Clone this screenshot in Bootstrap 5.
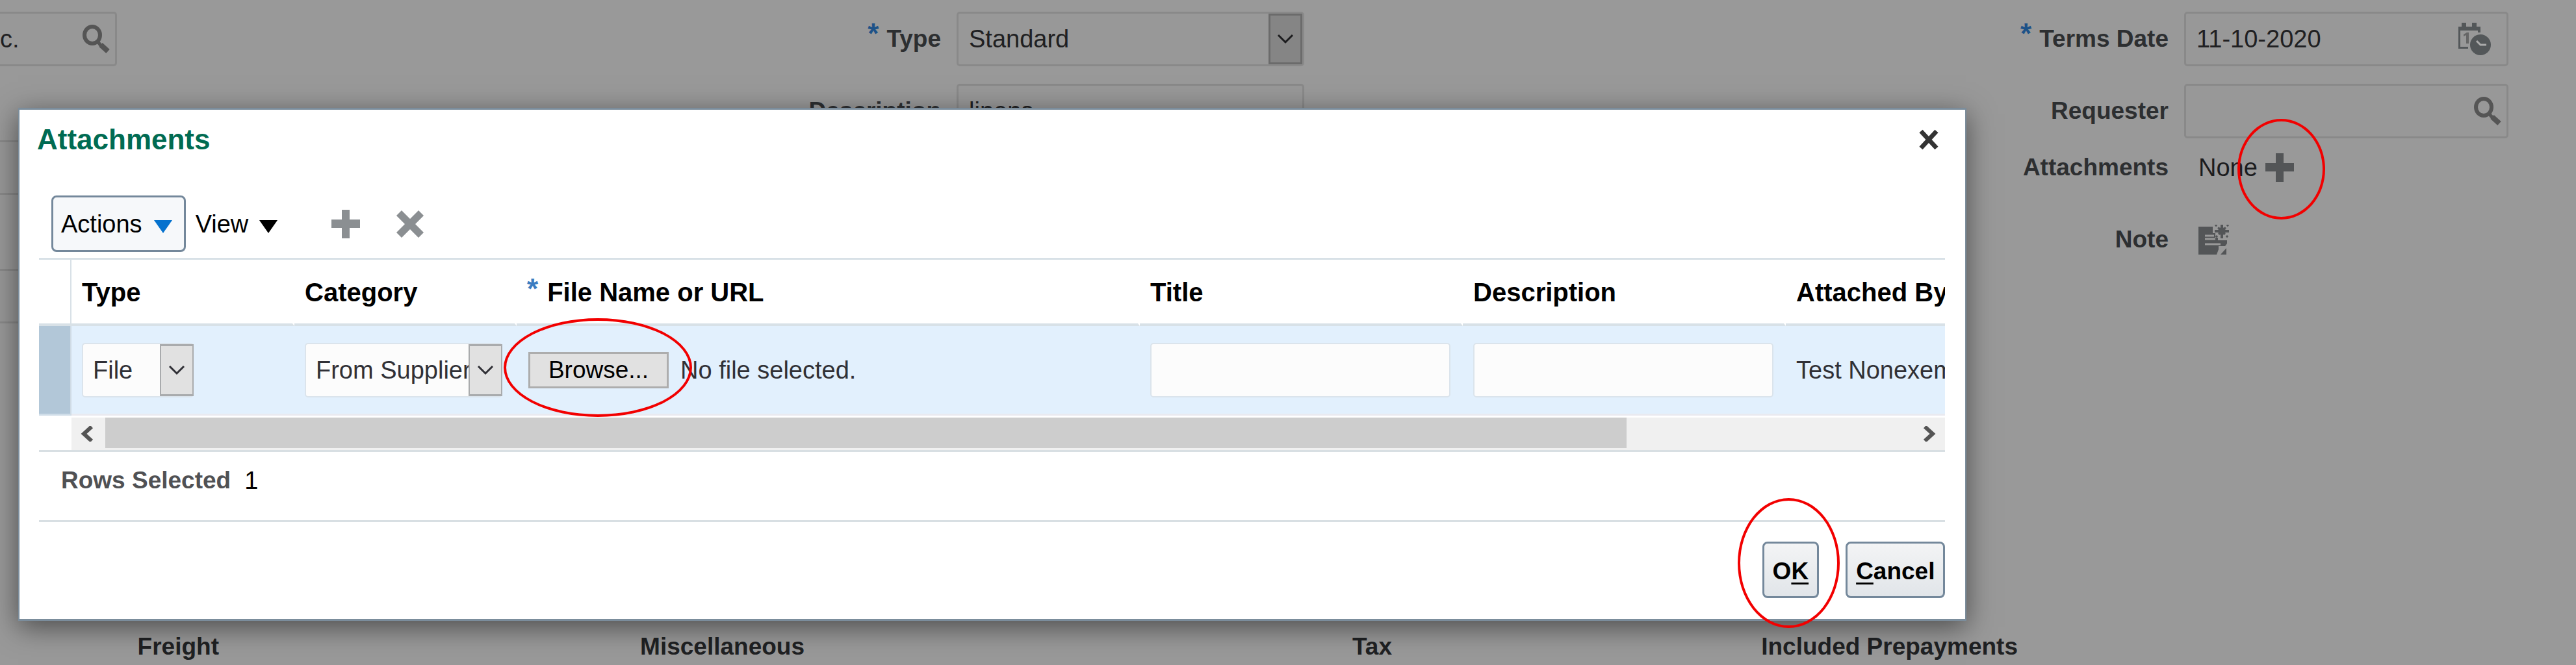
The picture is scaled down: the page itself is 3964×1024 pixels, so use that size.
<!DOCTYPE html>
<html lang="en">
<head>
<meta charset="utf-8">
<meta name="viewport" content="width=device-width, initial-scale=1">
<title>Attachments</title>
<link rel="stylesheet" href="https://cdn.jsdelivr.net/npm/bootstrap@5.3.0/dist/css/bootstrap.min.css">
<style>
  body { background: #999; color: #1c1c1e; font: 38px/44px "Liberation Sans", Arial, sans-serif; overflow-x: hidden; }
  svg { display: block; flex: none; }
  label, .caption { font-size: 37px; font-weight: 700; color: #2d2f31; white-space: nowrap; }
  button { font: inherit; color: inherit; }

  /* invoice form behind the dialog */
  .invoice { min-height: 100vh; padding-top: 18px; }
  .edge-col { width: 180px; flex: none; }
  .mid-col { flex: 1827 1 0; }
  .end-col { flex: 1853 1 0; margin-right: 104px; }
  .line { height: 84px; gap: 24px; }
  .line + .line { margin-top: 27px; }
  .line.tight { margin-top: 3px; }
  .slot { width: 499px; }
  .mid-col .slot { width: 535px; }
  .shell { height: 84px; border: 3px solid #898989; border-radius: 5px; background: #989898; }
  .shell input, .shell select { font: inherit; color: #202022; background: none; border: 0; outline: 0; appearance: none; min-width: 0; height: 100%; padding: 0 0 0 16px; }
  .edge-col .shell { border-left: 0; border-radius: 0 5px 5px 0; }
  .edge-col .shell input { padding-left: 0; }
  .edge-col .shell + .shell { margin-top: 114px; }
  .req { color: #1d5288; font-size: 44px; font-weight: 700; line-height: 44px; align-self: flex-start; }
  .line .req { margin: 12px -12px 0 0; }
  .drop { width: 52px; height: 100%; margin-left: -52px; flex: none; background: #858585; border: 3px solid #6b6b6b; pointer-events: none; }
  .none { padding-left: 22px; gap: 12px; }
  .totals { display: grid; grid-template-columns: 337fr 901fr 904fr 963fr 859fr; padding-bottom: 2px; text-align: right; }
  .totals .caption { color: #1f2123; line-height: 52px; }

  /* marker rings */
  .ring-host { position: relative; }
  .ring { position: absolute; border: 4px solid #f20000; border-radius: 50%; pointer-events: none; }
  .ring-add { left: -43px; top: -53px; width: 135px; height: 155px; }
  .ring-browse { left: -38px; top: -52px; width: 290px; height: 152px; }
  .ring-ok { left: -38px; top: -67px; width: 157px; height: 200px; }

  /* dialog */
  .dialog-box { position: absolute; left: 28px; top: 166px; width: calc(76.4% - 30px); background: #fff; color: #000; border: 3px solid #7b8d9c; border-width: 3px 2px; padding: 0 31px 0 30px; box-shadow: 0 10px 40px rgba(0,0,0,.5); }
  .dialog-title { font-size: 44px; line-height: 50px; font-weight: 700; color: #006b52; margin: 0 0 0 -3px; }
  .dialog-head { padding-top: 21px; }
  .close-x { padding: 0 9px; border: 0; background: none; }
  .tools { margin-top: 61px; height: 87px; padding-left: 19px; }
  .tool { height: 87px; padding: 0 18px 0 12px; gap: 18px; border: 3px solid #74889b; border-radius: 8px; background: #f6f8fa; }
  .tool.flat { border-color: transparent; background: none; padding: 0; gap: 17px; margin: 0 80px 0 12px; }
  .tools .bare { border: 0; background: none; padding: 0; margin-right: 54px; }
  .sheet { margin-top: 9px; border-top: 3px solid #d8e1e7; overflow-x: clip; }
  .sheet table { width: 3100px; table-layout: fixed; border-collapse: separate; border-spacing: 0; }
  .sheet th { height: 102px; padding: 2px 0 0 16px; font-size: 40px; font-weight: 700; vertical-align: middle; border-bottom: 4px solid #d8e1e7; border-right: 3px solid #fff; white-space: nowrap; }
  .sheet th:first-child { border-right: 2px solid #d8e1e7; border-bottom-color: #d8e1e7; }
  .sheet th .req { color: #3b7cc0; font-size: 44px; line-height: 34px; margin-right: 14px; }
  .sheet td { height: 138px; padding: 0 0 0 16px; background: #e2f0fd; color: #303036; border-bottom: 3px solid #e9eaf0; white-space: nowrap; vertical-align: middle; }
  .sheet td:first-child { background: #b2c7d8; border-right: 2px solid #cfdbe5; border-bottom-color: #cfdde8; }
  .cell-field { height: 84px; background: #fcfcfc; border: 2px solid #dbe4ec; border-radius: 5px; }
  select.cell-field, input.cell-field { font: inherit; color: #303036; appearance: none; padding: 0 0 0 15px; outline: 0; display: block; }
  .cell-drop { width: 52px; height: 80px; margin-left: -52px; flex: none; background: #e1e1e1; border: 3px solid #a9abad; border-width: 3px 2px; pointer-events: none; z-index: 1; }
  .browse { width: 216px; height: 56px; background: #e1e1e1; border: 3px solid #adadad; color: #000; padding: 0; line-height: 50px; font-size: 37px; }
  .file-pick { padding-left: 2px; gap: 18px; }
  .scroll-track { margin: 3px 0 0 50px; height: 50px; background: #f0f0f0; color: #555; padding: 0 14px; }
  .scroll-thumb { flex: 0 0 82%; height: 47px; background: #cdcdcd; margin-left: 18px; align-self: flex-start; }
  .selected { border-top: 3px solid #d8dfe3; border-bottom: 3px solid #d8dfe3; height: 111px; padding: 22px 0 0 34px; gap: 21px; }
  .selected .caption { color: #505154; }
  .actions { padding: 30px 0 32px; gap: 41px; }
  .action { height: 87px; padding: 5px 13px 0; border: 3px solid #74889b; border-radius: 8px; background: linear-gradient(#f3f4f5, #e1e5e9); font-size: 37px; font-weight: 700; }
  .action u { text-decoration-thickness: 3px; text-underline-offset: 5px; }
</style>
<script src="https://cdn.jsdelivr.net/npm/bootstrap@5.3.0/dist/js/bootstrap.bundle.min.js"></script>
</head>
<body>
<svg width="0" height="0" class="position-absolute" aria-hidden="true">
  <symbol id="i-search" viewBox="0 0 42 44"><ellipse cx="15" cy="16" rx="12" ry="13" fill="none" stroke="currentColor" stroke-width="6"/><path d="M24 27l6 7" stroke="currentColor" stroke-width="5"/><path d="M28 31l11 10" stroke="currentColor" stroke-width="8"/></symbol>
  <symbol id="i-plus" viewBox="0 0 44 44"><path d="M16 0h12v15h16v13H28v16H16V28H0V15h16z" fill="currentColor"/></symbol>
  <symbol id="i-cross" viewBox="0 0 44 44"><path d="M9 1l13 13L35 1l8 8-13 13 13 13-8 8-13-13L9 43l-8-8 13-13L1 9z" fill="currentColor"/></symbol>
  <symbol id="i-thin-cross" viewBox="0 0 32 32"><path d="M4 3l24 26M28 3L4 29" fill="none" stroke="currentColor" stroke-width="7"/></symbol>
  <symbol id="i-down" viewBox="0 0 26 16"><path d="M2 2l11 11L24 2" fill="none" stroke="currentColor" stroke-width="3"/></symbol>
  <symbol id="i-tri" viewBox="0 0 28 20"><path d="M0 0h28L14 20z" fill="currentColor"/></symbol>
</svg>

<main class="invoice d-flex flex-column justify-content-between">
  <form class="d-flex align-items-start">
    <div class="edge-col">
      <div class="shell d-flex align-items-center">
        <input class="flex-fill" type="text" value="c." aria-label="Supplier">
        <svg class="me-2" width="42" height="44" style="color:#555"><use href="#i-search"/></svg>
      </div>
      <div class="shell"></div>
      <div class="shell"></div>
    </div>

    <div class="mid-col">
      <div class="line d-flex align-items-center justify-content-end">
        <span class="req">*</span><label for="inv-type">Type</label>
        <div class="slot shell d-flex">
          <select id="inv-type" class="flex-fill"><option>Standard</option></select>
          <span class="drop d-flex align-items-center justify-content-center"><svg width="26" height="16"><use href="#i-down"/></svg></span>
        </div>
      </div>
      <div class="line d-flex align-items-center justify-content-end">
        <label for="inv-desc">Description</label>
        <div class="slot shell d-flex"><input id="inv-desc" class="flex-fill" type="text" value="linens"></div>
      </div>
    </div>

    <div class="end-col">
      <div class="line d-flex align-items-center justify-content-end">
        <span class="req">*</span><label for="terms">Terms Date</label>
        <div class="slot shell d-flex align-items-center">
          <input id="terms" class="flex-fill" type="text" value="11-10-2020">
          <svg class="me-4" width="50" height="50" viewBox="0 0 50 50" fill="#535759"><path d="M0 6h5V0h7v6h9V0h7v6h6v9h-4v-3H3v25h12v3H0z"/><path d="M8 18l5-3h3v17h-4V19l-4 2z" fill="#666"/><circle cx="34" cy="34" r="16"/><path d="M28 28l6 6h9" fill="none" stroke="#aaa" stroke-width="3"/></svg>
        </div>
      </div>
      <div class="line d-flex align-items-center justify-content-end">
        <label for="requester">Requester</label>
        <div class="slot shell d-flex align-items-center">
          <input id="requester" class="flex-fill" type="text">
          <svg class="me-2" width="42" height="44" style="color:#555"><use href="#i-search"/></svg>
        </div>
      </div>
      <div class="line tight d-flex align-items-center justify-content-end">
        <span class="caption">Attachments</span>
        <div class="slot none d-flex align-items-center">
          <span>None</span>
          <button type="button" class="ring-host border-0 bg-transparent p-0" aria-label="Add attachment" style="color:#535557"><svg width="44" height="44"><use href="#i-plus"/></svg><span class="ring ring-add"></span></button>
        </div>
      </div>
      <div class="line d-flex align-items-center justify-content-end">
        <span class="caption">Note</span>
        <div class="slot none">
          <svg width="48" height="46" viewBox="0 0 48 46" fill="#535557"><path d="M0 3h22v10h4v7h4v4h14v5l-3 4H31v5l-3 8H0z"/><path d="M10 17h14M10 22h16M10 30h24" stroke="#999" stroke-width="3"/><path d="M36 0v21M25 10h22" stroke="#535557" stroke-width="4"/><path d="M26 0l20 20M46 0L26 20" stroke="#535557" stroke-width="3" stroke-dasharray="3 3"/><circle cx="36" cy="10" r="6"/><path d="M34 46l9-10v10z"/></svg>
        </div>
      </div>
    </div>
  </form>

  <div class="totals">
    <span class="caption">Freight</span><span class="caption">Miscellaneous</span><span class="caption">Tax</span><span class="caption">Included Prepayments</span>
  </div>
</main>

<section class="dialog-box" role="dialog" aria-labelledby="dlg-title">
  <header class="dialog-head d-flex align-items-center justify-content-between">
    <h1 id="dlg-title" class="dialog-title">Attachments</h1>
    <button type="button" class="close-x" aria-label="Close" style="color:#333"><svg width="32" height="32"><use href="#i-thin-cross"/></svg></button>
  </header>

  <div class="tools d-flex align-items-center">
    <button type="button" class="tool d-flex align-items-center">Actions<svg width="28" height="20" class="mt-2" style="color:#0572ce"><use href="#i-tri"/></svg></button>
    <button type="button" class="tool flat d-flex align-items-center">View<svg width="28" height="20" class="mt-2"><use href="#i-tri"/></svg></button>
    <button type="button" class="bare" aria-label="Add" style="color:#8b8f92"><svg width="44" height="44"><use href="#i-plus"/></svg></button>
    <button type="button" class="bare" aria-label="Delete" style="color:#8b8f92"><svg width="46" height="44"><use href="#i-cross"/></svg></button>
  </div>

  <div class="sheet">
    <table>
      <colgroup><col style="width:50px"><col style="width:343px"><col style="width:342px"><col style="width:959px"><col style="width:497px"><col style="width:497px"><col></colgroup>
      <thead>
        <tr><th></th><th>Type</th><th>Category</th><th><div class="d-flex"><span class="req">*</span>File Name or URL</div></th><th>Title</th><th>Description</th><th>Attached By</th></tr>
      </thead>
      <tbody>
        <tr>
          <td></td>
          <td><div class="d-flex align-items-center"><select class="cell-field" style="width:172px" aria-label="Type"><option>File</option></select><span class="cell-drop d-flex align-items-center justify-content-center"><svg width="26" height="16"><use href="#i-down"/></svg></span></div></td>
          <td><div class="d-flex align-items-center"><select class="cell-field" style="width:304px" aria-label="Category"><option>From Supplier</option></select><span class="cell-drop d-flex align-items-center justify-content-center"><svg width="26" height="16"><use href="#i-down"/></svg></span></div></td>
          <td><div class="file-pick d-flex align-items-center"><span class="ring-host"><button type="button" class="browse d-block">Browse...</button><span class="ring ring-browse"></span></span><span>No file selected.</span></div></td>
          <td><input class="cell-field" style="width:462px" type="text" aria-label="Title"></td>
          <td><input class="cell-field" style="width:462px" type="text" aria-label="Description"></td>
          <td>Test Nonexempt</td>
        </tr>
      </tbody>
    </table>
  </div>
  <div class="scroll-track d-flex align-items-center">
    <svg width="20" height="24" viewBox="0 0 20 24"><path d="M17 1L5 12l12 11" fill="none" stroke="currentColor" stroke-width="6"/></svg>
    <div class="scroll-thumb"></div>
    <svg class="ms-auto" width="20" height="24" viewBox="0 0 20 24"><path d="M3 1l12 11L3 23" fill="none" stroke="currentColor" stroke-width="6"/></svg>
  </div>
  <div class="selected d-flex"><span class="caption">Rows Selected</span><span>1</span></div>
  <footer class="actions d-flex justify-content-end">
    <span class="ring-host"><button type="button" class="action">O<u>K</u></button><span class="ring ring-ok"></span></span>
    <button type="button" class="action"><u>C</u>ancel</button>
  </footer>
</section>
</body>
</html>
